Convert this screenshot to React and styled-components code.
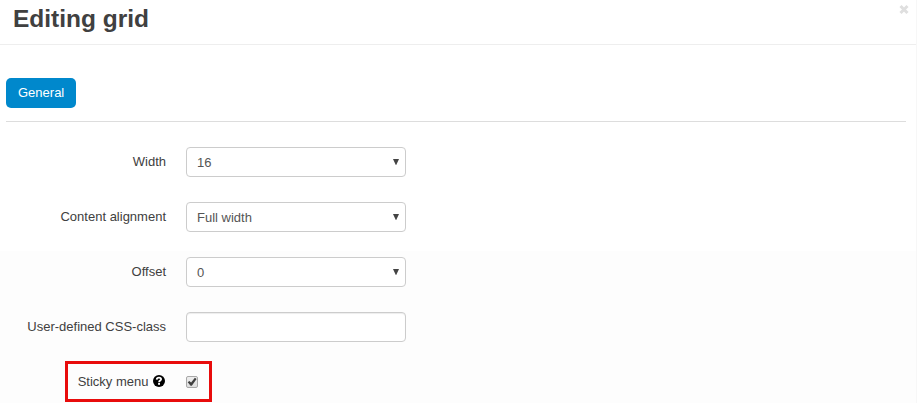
import React, { useState } from 'react'
import styled, { createGlobalStyle } from 'styled-components';

const fields = [
  { id: 'width', label: 'Width', value: '16', options: ['16', '12', '8', '4'] },
  { id: 'alignment', label: 'Content alignment', value: 'Full width', options: ['Full width', 'Center'] },
  { id: 'offset', label: 'Offset', value: '0', options: ['0', '1', '2', '3'] },
];

const SelectField = ({ id, value, options }) => (
  <SelectBox>
    <Select id={id} defaultValue={value}>
      {options.map((option) => (
        <option key={option}>{option}</option>
      ))}
    </Select>
    <Arrow viewBox="0 0 6 7">
      <path d="M0 0H6L3.2 6H2.8Z" fill="#444" />
    </Arrow>
  </SelectBox>
);

const App = () => {
  const [sticky, setSticky] = useState(true);

  return (
    <>
      <GlobalStyle />
      <Modal>
        <Header>
          <Title>Editing grid</Title>
          <Close type="button" aria-label="Close">
            <svg width="10" height="11" viewBox="0 0 10 11">
              <path d="M1.5 2L8.5 9M8.5 2L1.5 9" stroke="#dfdfdf" strokeWidth="3" />
            </svg>
          </Close>
        </Header>

        <Body>
          <Tabs>
            <Tab type="button">General</Tab>
          </Tabs>

          <Form>
            {fields.map((field) => (
              <Row key={field.id}>
                <Label htmlFor={field.id}>{field.label}</Label>
                <SelectField {...field} />
              </Row>
            ))}

            <Row>
              <Label htmlFor="css-class">User-defined CSS-class</Label>
              <Input id="css-class" type="text" />
            </Row>

            <Row $highlight>
              <Label htmlFor="sticky">
                Sticky menu
                <HelpIcon viewBox="0 0 12 12">
                  <circle cx="6" cy="6" r="6" fill="#000" />
                  <path d="M3.7 4.6C3.8 3.2 4.8 2.6 6 2.6C7.3 2.6 8.1 3.4 8.1 4.3C8.1 5.6 6.1 5.6 6.1 7.2" fill="none" stroke="#fff" strokeWidth="1.8" />
                  <rect x="5.1" y="8" width="1.9" height="1.8" fill="#fff" />
                </HelpIcon>
              </Label>
              <Checkbox
                id="sticky"
                type="button"
                role="checkbox"
                aria-checked={sticky}
                onClick={() => setSticky(!sticky)}
              >
                {sticky && (
                  <svg width="10" height="10" viewBox="0 0 10 10">
                    <path d="M0.7 5.3L2.3 3.9L4.1 5.4L7.9 0.8L9.6 2L4.8 8.8H3.6Z" fill="#404040" />
                  </svg>
                )}
              </Checkbox>
            </Row>
          </Form>
        </Body>
      </Modal>
    </>
  )
};

const GlobalStyle = createGlobalStyle`
    *, *::after {
        box-sizing: border-box;
    }

    body {
        margin: 0;
        overflow: hidden;
        color: #404040;
        font: 13px/20px "Liberation Sans", Arial, sans-serif;
    }

    button, input, select {
        font: inherit;
    }
`;

const Modal = styled.div`
    height: 403px;
    border-right: 1px solid #f7f7f7;
    background: linear-gradient(#fff 251px, #fdfdfd 251px);
`;

const Header = styled.header`
    display: flex;
    justify-content: space-between;
    align-items: flex-start;
    height: 45px;
    padding: 4px 7px 0 13px;
    border-bottom: 1px solid #eee;
`;

const Title = styled.h3`
    margin: 0;
    font-size: 24.5px;
    font-weight: bold;
    line-height: 30px;
`;

const Close = styled.button`
    display: flex;
    padding: 0;
    border: 0;
    background: none;
`;

const Body = styled.div`
    padding: 33px 10px 0 6px;
`;

const Tabs = styled.nav`
    height: 44px;
    border-bottom: 1px solid #ddd;
`;

const Tab = styled.button`
    display: block;
    height: 30px;
    padding: 0 12px;
    border: 0;
    border-radius: 5px;
    color: #fff;
    background: #08c;
    line-height: 30px;
`;

const Form = styled.form`
    display: grid;
    gap: 25px;
    padding-top: 25px;
`;

const Row = styled.div`
    display: flex;
    align-items: flex-start;
    gap: 20px;
    height: 30px;
    position: relative;

    /* red frame around the highlighted option */
    &::after {
        content: "";
        display: ${({ $highlight }) => ($highlight ? 'block' : 'none')};
        position: absolute;
        top: -6px;
        left: 59px;
        width: 147px;
        height: 41px;
        border: 3px solid #e80c0c;
        pointer-events: none;
    }
`;

const Label = styled.label`
    display: flex;
    justify-content: flex-end;
    align-items: center;
    width: 160px;
    padding-top: 5px;
`;

const HelpIcon = styled.svg`
    width: 12px;
    height: 12px;
    margin: 0 1px 2px 4.5px;
`;

const SelectBox = styled.div`
    position: relative;
    width: 220px;
`;

const Select = styled.select`
    display: block;
    width: 100%;
    height: 30px;
    padding: 2px 10px 0;
    border: 1px solid #ccc;
    border-radius: 4px;
    color: #555;
    background: #fff;
    appearance: none;
`;

const Arrow = styled.svg`
    position: absolute;
    top: 12px;
    right: 7px;
    width: 6px;
    height: 7px;
    pointer-events: none;
`;

const Input = styled.input`
    width: 220px;
    height: 30px;
    padding: 4px 6px;
    border: 1px solid #ccc;
    border-radius: 4px;
    color: #555;
    background: #fff;
    box-shadow: inset 0 1px 1px rgba(0, 0, 0, 0.075);
`;

const Checkbox = styled.button`
    display: flex;
    justify-content: center;
    align-items: center;
    width: 12px;
    height: 12px;
    margin-top: 9px;
    padding: 0;
    border: 1px solid #a8a8a8;
    border-radius: 2px;
    background: linear-gradient(#eee, #dedede);
`;

export default App
